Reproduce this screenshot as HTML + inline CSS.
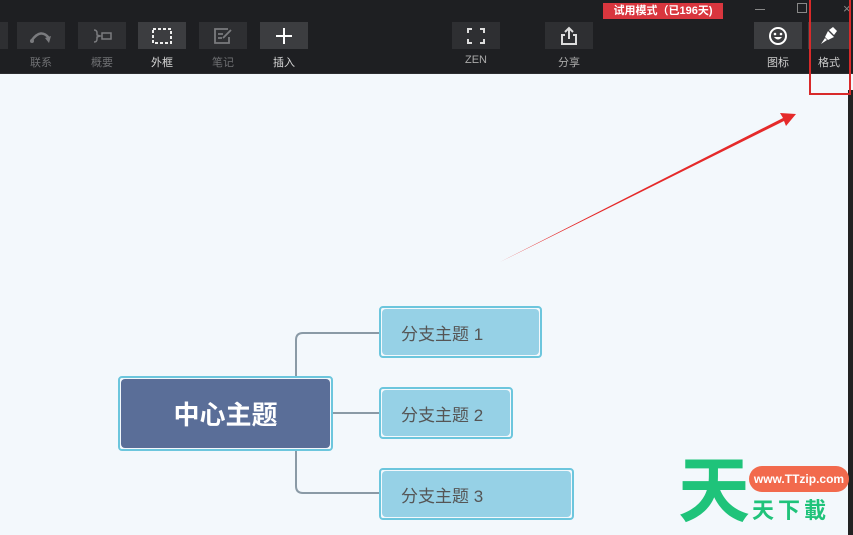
<!DOCTYPE html><html><head><meta charset="utf-8"><style>
*{margin:0;padding:0;box-sizing:border-box}
body{width:853px;height:535px;overflow:hidden;background:#f3f8fc;position:relative;font-family:"Liberation Sans","Noto Sans CJK SC",sans-serif}
.tb{position:absolute;left:0;top:0;width:853px;height:74px;background:#1e1f22;border-bottom:1px solid #2c2d30}
.b{position:absolute;top:22px;width:48px;height:27px;background:#2e2f32;display:flex;align-items:center;justify-content:center}
.b.on{background:#3c3d40}
.l{position:absolute;top:54px;width:48px;text-align:center;font-size:11px;color:#6e6f72}
.l.w{color:#d8d8d8}
.node{position:absolute;border:2px solid #6cc6dd;border-radius:4px;background:#f3f8fc;padding:1px}
.node>div{width:100%;height:100%;border-radius:4px;display:flex;align-items:center}
</style></head><body>
<div class="tb">
<div class="b" style="left:-40px"></div>
<div class="b" style="left:17px"><svg width="26" height="16"><path d="M4 12 Q13 0 21 10" stroke="#7a7b7e" stroke-width="2.5" fill="none"/><path d="M17 10 L23 8 L21 15Z" fill="#7a7b7e"/><circle cx="4" cy="13" r="2" fill="#7a7b7e"/></svg></div>
<div class="l" style="left:17px">联系</div>
<div class="b" style="left:78px"><svg width="26" height="16"><path d="M5 2 Q8 2 8 5 L8 7 L11 8 L8 9 L8 11 Q8 14 5 14" stroke="#7a7b7e" stroke-width="1.5" fill="none"/><rect x="13" y="5" width="9" height="6" stroke="#7a7b7e" stroke-width="1.5" fill="none"/></svg></div>
<div class="l" style="left:78px">概要</div>
<div class="b on" style="left:138px"><svg width="22" height="18"><rect x="2" y="2" width="18" height="14" stroke="#eee" stroke-width="2" stroke-dasharray="3 2" fill="none"/></svg></div>
<div class="l w" style="left:138px">外框</div>
<div class="b" style="left:199px"><svg width="22" height="18"><path d="M16 2 H3 V16 H17 V10 M6 7 H11 M6 11 H10 M11 11 L19 3" stroke="#7a7b7e" stroke-width="1.8" fill="none"/></svg></div>
<div class="l" style="left:199px">笔记</div>
<div class="b on" style="left:260px"><svg width="18" height="18"><path d="M9 1V17M1 9H17" stroke="#fff" stroke-width="2"/></svg></div>
<div class="l w" style="left:260px">插入</div>
<div class="b" style="left:452px"><svg width="20" height="18"><path d="M2 6V2H6M14 2H18V6M18 12V16H14M6 16H2V12" stroke="#ddd" stroke-width="2" fill="none"/></svg></div>
<div class="l" style="left:452px;color:#aaa">ZEN</div>
<div class="b" style="left:545px"><svg width="20" height="20"><path d="M6 9H3V18H17V9H14M10 13V2M6 6L10 2L14 6" stroke="#ddd" stroke-width="2" fill="none"/></svg></div>
<div class="l" style="left:545px;color:#aaa">分享</div>
<div style="position:absolute;left:603px;top:3px;width:120px;height:16px;background:#d9363e;color:#fff;font-size:11px;font-weight:bold;text-align:center;line-height:16px">试用模式（已196天)</div>
<div style="position:absolute;left:755px;top:9px;width:10px;height:1px;background:#888"></div>
<div style="position:absolute;left:797px;top:3px;width:10px;height:10px;border:1px solid #888"></div>
<div style="position:absolute;left:843px;top:1px;color:#888;font-size:13px">×</div>
<div class="b on" style="left:754px"><svg width="20" height="20"><circle cx="10" cy="10" r="8" stroke="#fff" stroke-width="2" fill="none"/><circle cx="7" cy="8" r="1.3" fill="#fff"/><circle cx="13" cy="8" r="1.3" fill="#fff"/><path d="M6 11 Q10 16 14 11Z" fill="#fff"/></svg></div>
<div class="l" style="left:754px;color:#ccc">图标</div>
<div class="b on" style="left:808px;width:42px"><svg width="18" height="18"><path d="M9 3 L13 0 L17 4 L14 8Z" fill="#fff"/><path d="M8 4 L14 10 L8 13 L5 10Z" fill="#fff"/><path d="M5 11 L1 17 L7 13" fill="#fff"/></svg></div>
<div class="l" style="left:805px;color:#ccc">格式</div>
</div>
<div style="position:absolute;left:848px;top:90px;width:5px;height:445px;background:#222"></div>
<div style="position:absolute;left:809px;top:-2px;width:42px;height:97px;border:2px solid #d82a2a"></div>
<svg style="position:absolute;left:0;top:0" width="853" height="535"><path d="M500 262 L783 118 L780 113 L796 114 L786 126 L784 121Z" fill="#e52a2a"/>
<path d="M379 333 H303 Q296 333 296 340 V486 Q296 493 303 493 H379 M333 413 H379" stroke="#8a9aa6" stroke-width="2" fill="none"/></svg>
<div class="node" style="left:118px;top:376px;width:215px;height:75px"><div style="background:#5a6e98;justify-content:center;color:#fff;font-size:26px;font-weight:bold">中心主题</div></div>
<div class="node" style="left:379px;top:306px;width:163px;height:52px"><div style="background:#96d1e6;padding-left:19px;color:#555;font-size:17px">分支主题 1</div></div>
<div class="node" style="left:379px;top:387px;width:134px;height:52px"><div style="background:#96d1e6;padding-left:19px;color:#555;font-size:17px">分支主题 2</div></div>
<div class="node" style="left:379px;top:468px;width:195px;height:52px"><div style="background:#96d1e6;padding-left:19px;color:#555;font-size:17px">分支主题 3</div></div>
<div style="position:absolute;left:678px;top:456px;font-size:72px;font-weight:bold;color:#1fc37a;line-height:1">天</div>
<div style="position:absolute;left:749px;top:466px;width:100px;height:26px;border-radius:13px;background:#f26a4d;color:#fff;font-size:12px;font-weight:bold;text-align:center;line-height:26px">www.TTzip.com</div>
<div style="position:absolute;left:752px;top:500px;font-size:22px;font-weight:bold;color:#1fc37a;line-height:1;letter-spacing:4px">天下載</div>
</body></html>
